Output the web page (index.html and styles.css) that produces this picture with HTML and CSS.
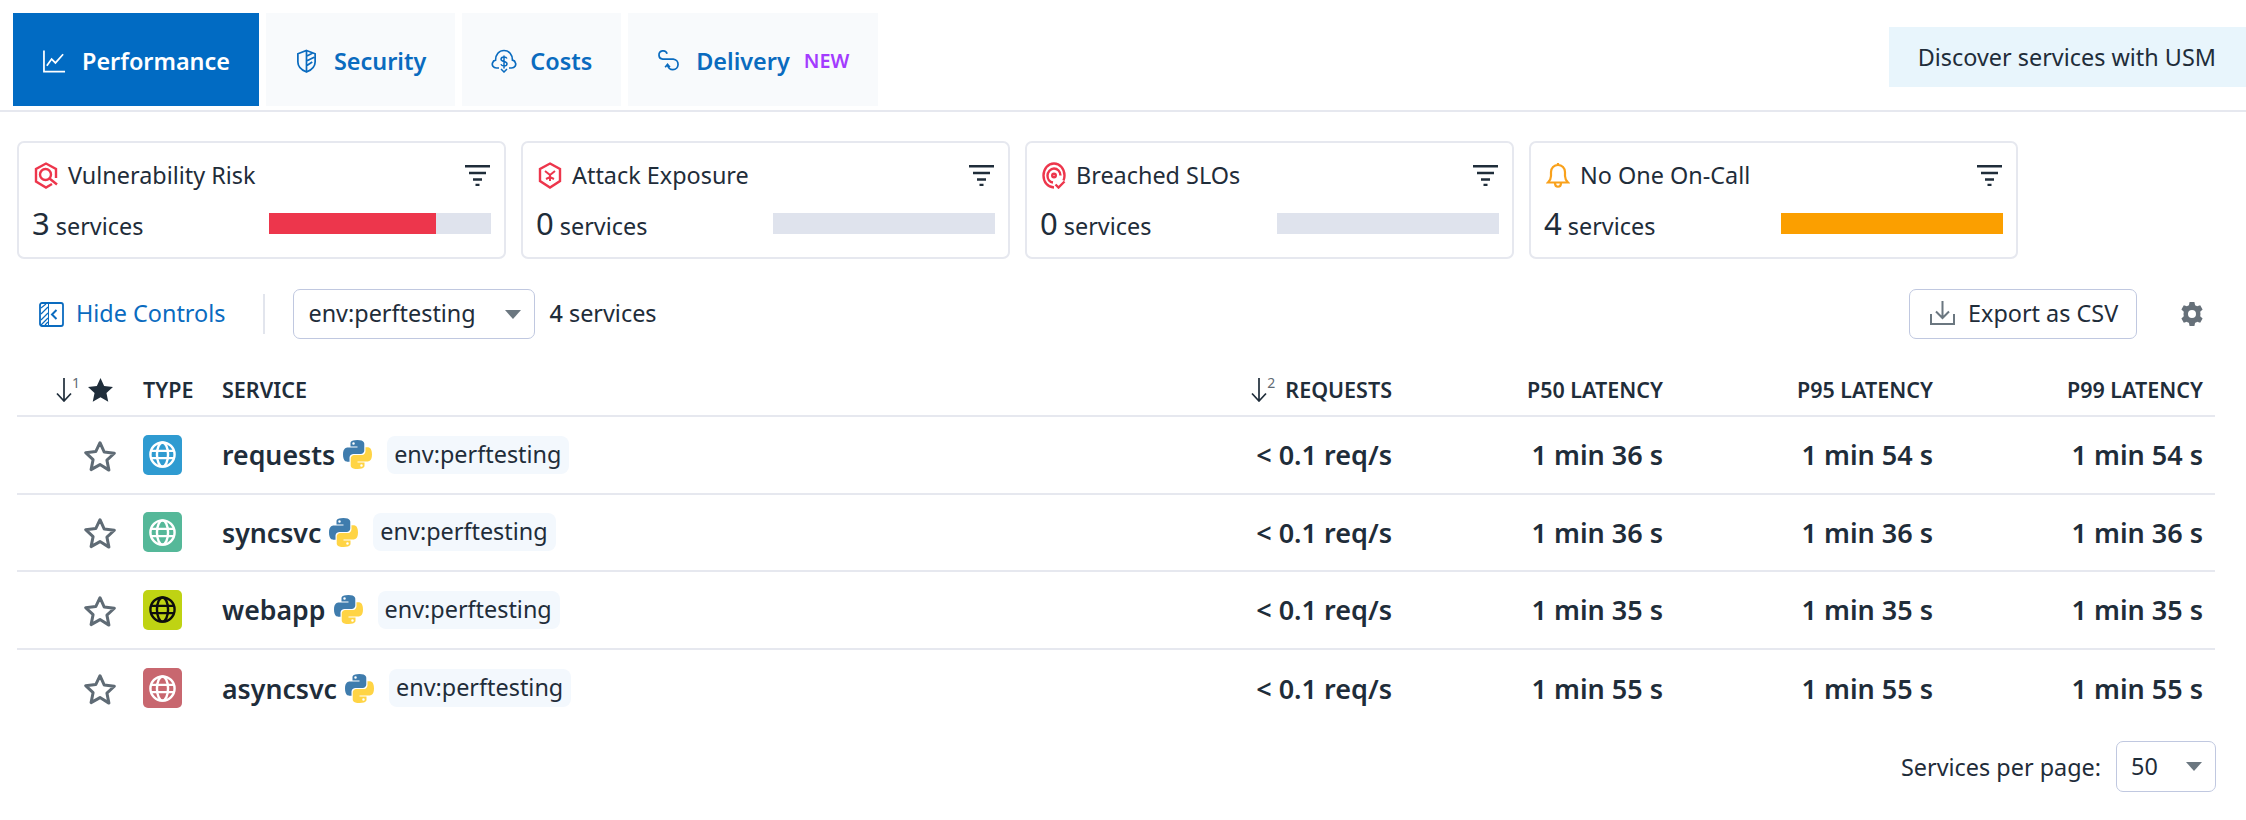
FILE: index.html
```html
<!DOCTYPE html>
<html lang="en">
	<head>
		<meta charset="utf-8">
		<title>Service Catalog</title>
		<link rel="stylesheet" href="styles.css">
	</head>
	<body>
		<svg class="defs" aria-hidden="true">
			<symbol id="filter" viewBox="0 0 25 21"><path d="M0 1.2h25M4 8h17M8 14.5h9M10.5 20h4" fill="none" stroke="currentColor" stroke-width="2.4"/></symbol>
			<symbol id="globe" viewBox="0 0 24 24"><g fill="none" stroke="currentColor" stroke-width="2"><circle cx="12" cy="12" r="10"/><ellipse cx="12" cy="12" rx="4.6" ry="10"/><path d="M2.5 9h19M2.5 15h19"/></g></symbol>
			<symbol id="star" viewBox="0 0 32 30"><path d="M16 2.5l4 8.8 9.500 1.100-7 6.500 1.900 9.400L16 23.100 7.600 27.800l1.900-9.400-7-6.500 9.500-1.100z" fill="none" stroke="#5f6b75" stroke-width="2.800" stroke-linejoin="round"/></symbol>
			<symbol id="python" viewBox="0 0 24 24">
				<path fill="#3f7cad" d="M11.900 0C5.800 0 6.200 2.600 6.200 2.600v2.800h5.800v.8H3.900S0 5.800 0 12s3.400 5.900 3.400 5.900h2v-2.900s-.1-3.400 3.300-3.400h5.700s3.200.1 3.200-3.100V3.200S18.100 0 11.900 0zM8.700 1.800a1 1 0 1 1 0 2.100 1 1 0 0 1 0-2.100z"/>
				<path fill="#ffd445" d="M12.100 24c6.100 0 5.700-2.600 5.700-2.600v-2.800H12v-.8h8.100S24 18.200 24 12s-3.400-5.900-3.400-5.900h-2V9s.1 3.400-3.300 3.400H9.600s-3.200-.1-3.200 3.100v5.300S5.900 24 12.100 24zm3.200-1.800a1 1 0 1 1 0-2.100 1 1 0 0 1 0 2.100z"/>
			</symbol>
			<symbol id="sortdown" viewBox="0 0 16 24"><path d="M8 0v23M1 15.500L8 23l7-7.500" fill="none" stroke="currentColor" stroke-width="1.700"/></symbol>
		</svg>

		<div class="topbar">
			<nav class="tabs">
				<a class="tab active">
					<svg class="tab-icon" viewBox="0 0 24 24"><path d="M1 1v22h22M4 17l5-7 4 4 8-9" fill="none" stroke="currentColor" stroke-width="1.800"/></svg>
					Performance
				</a>
				<a class="tab">
					<svg class="tab-icon" viewBox="0 0 24 24"><path d="M12 1l9 3.500V13c0 5-4 8.500-9 10.500C7 21.500 3 18 3 13V4.500zM12 1v22M12 7l6-3M12 12l8-4M12 17l6-4" fill="none" stroke="currentColor" stroke-width="1.800"/></svg>
					Security
				</a>
				<a class="tab">
					<svg class="tab-icon wide" viewBox="0 0 26 24"><path d="M8 19H5.500C2 19 .8 16.200 1.500 14c.5-1.600 1.800-2.600 3-2.800C4.500 5.500 8 1.500 13 1.500s8.500 4 8.500 9.700c1.300.2 2.600 1.200 3 2.800.7 2.200-.5 5-4 5H18" fill="none" stroke="currentColor" stroke-width="1.700"/><path d="M16 9.500c-.5-1-1.600-1.500-3-1.500-1.800 0-3 1-3 2.300 0 3 6 1.500 6 4.400 0 1.300-1.300 2.300-3 2.300-1.500 0-2.600-.6-3.100-1.700M13 6.500v13M10 20l3 3 3-3" fill="none" stroke="currentColor" stroke-width="1.500"/></svg>
					Costs
				</a>
				<a class="tab">
					<svg class="tab-icon" viewBox="0 0 24 24"><path d="M10.500 4.500A4.300 4.300 0 1 0 6 10h11a5.500 5.500 0 1 1-6 6M8.500 18.500l2.500-3 2.500 3" fill="none" stroke="currentColor" stroke-width="1.800"/></svg>
					Delivery
					<span class="tab-new">NEW</span>
				</a>
			</nav>
			<a class="discover">Discover services with USM</a>
		</div>

		<section class="summary">
			<div class="card">
				<div class="card-head">
					<svg class="card-icon" viewBox="0 0 24 27"><g fill="none" stroke="#ed364c" stroke-width="2.400"><path d="M18 22l-6 3.500L2 19.500V7l10-5.500L22 7v9"/><circle cx="11.500" cy="12.500" r="5.500"/><path d="M15.500 16.500l7.500 6"/></g></svg>
					<span class="card-title">Vulnerability Risk</span>
					<svg class="filter-icon"><use href="#filter"/></svg>
				</div>
				<div class="card-body">
					<span class="count"><b>3</b> services</span>
					<div class="bar"><div class="bar-fill red" style="width: 75%"></div></div>
				</div>
			</div>
			<div class="card">
				<div class="card-head">
					<svg class="card-icon" viewBox="0 0 24 27"><g fill="none" stroke="#ed364c" stroke-width="2.400"><path d="M12 1.500l10 5.500v12l-10 6.500L2 19V7z"/><path d="M7 9l5 4 5-4M12 13v6M8 17l4-2 4 2" stroke-width="2"/></g></svg>
					<span class="card-title">Attack Exposure</span>
					<svg class="filter-icon"><use href="#filter"/></svg>
				</div>
				<div class="card-body">
					<span class="count"><b>0</b> services</span>
					<div class="bar"></div>
				</div>
			</div>
			<div class="card">
				<div class="card-head">
					<svg class="card-icon" viewBox="0 0 24 27"><g fill="none" stroke="#ed364c" stroke-width="2.400"><path d="M12 25.500C5.500 25 1.500 20 1.500 13.500 1.500 7 6 1.500 12 1.500S22.500 7 22.500 13.500c0 2-.4 3.600-1 5"/><path d="M11 20.500c-3.500-.4-5.500-3.500-5.500-7S8.500 6.500 12 6.500s6.500 3 6.500 7"/><circle cx="12" cy="13.500" r="1.800"/><path d="M13.500 22.500l3 3 6-6"/></g></svg>
					<span class="card-title">Breached SLOs</span>
					<svg class="filter-icon"><use href="#filter"/></svg>
				</div>
				<div class="card-body">
					<span class="count"><b>0</b> services</span>
					<div class="bar"></div>
				</div>
			</div>
			<div class="card">
				<div class="card-head">
					<svg class="card-icon" viewBox="0 0 24 27"><g fill="none" stroke="#f9a11b" stroke-width="2.200"><path d="M2 20.500c2-2 3-3.500 3-6.500V10c0-4 3-7 7-7s7 3 7 7v4c0 3 1 4.500 3 6.500z"/><path d="M9 21c0 5 6 5 6 0M12 1v2"/></g></svg>
					<span class="card-title">No One On-Call</span>
					<svg class="filter-icon"><use href="#filter"/></svg>
				</div>
				<div class="card-body">
					<span class="count"><b>4</b> services</span>
					<div class="bar"><div class="bar-fill orange" style="width: 100%"></div></div>
				</div>
			</div>
		</section>

		<div class="controls">
			<a class="hide-controls">
				<svg class="hide-icon" viewBox="0 0 25 25">
					<rect x="1" y="1" width="23" height="23" rx="2" fill="none" stroke="currentColor" stroke-width="1.800"/>
					<path d="M2 6l5-4M2 12l7-7M2 18l7-7M2 23l7-7M6 23l3-3" stroke="currentColor" stroke-width="1.200" fill="none"/>
					<path d="M9.500 1v23" stroke="currentColor" stroke-width="1"/>
					<path d="M17.500 8l-4.500 4.500 4.500 4.500" fill="none" stroke="currentColor" stroke-width="2"/>
				</svg>
				Hide Controls
			</a>
			<span class="controls-sep"></span>
			<div class="select env-select">env:perftesting<span class="caret"></span></div>
			<span class="service-count"><b>4</b> services</span>
			<span class="controls-right">
				<button class="export">
					<svg class="export-icon" viewBox="0 0 25 25"><path d="M1 13v10h23V13M12.500 0v17M6 10.500l6.500 6.500 6.500-6.500" fill="none" stroke="#6b7780" stroke-width="2"/></svg>
					Export as CSV
				</button>
				<svg class="gear" viewBox="0 0 24 24"><path fill="#667079" fill-rule="evenodd" d="M9.600 0h4.800l.7 3.200c.7.300 1.400.7 2 1.100l3.100-1 2.400 4.200-2.400 2.200a9 9 0 0 1 0 4.600l2.400 2.200-2.400 4.200-3.100-1c-.6.500-1.300.8-2 1.100l-.7 3.200H9.600l-.7-3.200c-.7-.3-1.400-.6-2-1.100l-3.100 1-2.400-4.200 2.400-2.200a9 9 0 0 1 0-4.600L1.400 7.500l2.400-4.200 3.100 1c.6-.4 1.300-.8 2-1.100zM12 8a4 4 0 1 0 0 8 4 4 0 0 0 0-8z"/></svg>
			</span>
		</div>

		<div class="services">
			<div class="row head">
				<div class="cell cell-star">
					<span class="sort"><svg class="sort-arrow"><use href="#sortdown"/></svg><sup>1</sup></span>
					<svg class="star-solid" viewBox="0 0 26 25"><path fill="#1f2d3a" d="M13 0l3.800 8.300 9.200 1-6.800 6.200 1.900 9.200L13 20l-8.100 4.700 1.900-9.200L0 9.300l9.200-1z"/></svg>
				</div>
				<div class="cell">TYPE</div>
				<div class="cell">SERVICE</div>
				<div class="cell num"><span class="sort sort-req"><svg class="sort-arrow"><use href="#sortdown"/></svg><sup>2</sup></span>REQUESTS</div>
				<div class="cell num">P50 LATENCY</div>
				<div class="cell num">P95 LATENCY</div>
				<div class="cell num">P99 LATENCY</div>
			</div>
			<div class="row">
				<div class="cell cell-star"><svg class="star"><use href="#star"/></svg></div>
				<div class="cell"><span class="type-box blue"><svg class="globe"><use href="#globe"/></svg></span></div>
				<div class="cell"><span class="name">requests</span><svg class="python"><use href="#python"/></svg><span class="tag">env:perftesting</span></div>
				<div class="cell num value">&lt; 0.1 req/s</div>
				<div class="cell num value">1 min 36 s</div>
				<div class="cell num value">1 min 54 s</div>
				<div class="cell num value">1 min 54 s</div>
			</div>
			<div class="row">
				<div class="cell cell-star"><svg class="star"><use href="#star"/></svg></div>
				<div class="cell"><span class="type-box green"><svg class="globe"><use href="#globe"/></svg></span></div>
				<div class="cell"><span class="name">syncsvc</span><svg class="python"><use href="#python"/></svg><span class="tag">env:perftesting</span></div>
				<div class="cell num value">&lt; 0.1 req/s</div>
				<div class="cell num value">1 min 36 s</div>
				<div class="cell num value">1 min 36 s</div>
				<div class="cell num value">1 min 36 s</div>
			</div>
			<div class="row">
				<div class="cell cell-star"><svg class="star"><use href="#star"/></svg></div>
				<div class="cell"><span class="type-box lime"><svg class="globe"><use href="#globe"/></svg></span></div>
				<div class="cell"><span class="name">webapp</span><svg class="python"><use href="#python"/></svg><span class="tag">env:perftesting</span></div>
				<div class="cell num value">&lt; 0.1 req/s</div>
				<div class="cell num value">1 min 35 s</div>
				<div class="cell num value">1 min 35 s</div>
				<div class="cell num value">1 min 35 s</div>
			</div>
			<div class="row last">
				<div class="cell cell-star"><svg class="star"><use href="#star"/></svg></div>
				<div class="cell"><span class="type-box rose"><svg class="globe"><use href="#globe"/></svg></span></div>
				<div class="cell"><span class="name">asyncsvc</span><svg class="python"><use href="#python"/></svg><span class="tag">env:perftesting</span></div>
				<div class="cell num value">&lt; 0.1 req/s</div>
				<div class="cell num value">1 min 55 s</div>
				<div class="cell num value">1 min 55 s</div>
				<div class="cell num value">1 min 55 s</div>
			</div>
		</div>

		<div class="pager">
			Services per page:
			<div class="select page-select">50<span class="caret"></span></div>
		</div>
	</body>
</html>
```

FILE: styles.css
```css
* {
	box-sizing: border-box;
}
body {
	margin: 0;
	background-color: #ffffff;
	color: #1f2d3a;
	font-family: 'Noto Sans', sans-serif;
	font-size: 23.400px;
}
.defs {
	display: none;
}

/* tabs */
.topbar {
	display: flex;
	justify-content: space-between;
	align-items: center;
	height: 112px;
	padding: 14px 0 5px 13px;
	border-bottom: 2px solid #e6e8ef;
}
.tabs {
	display: flex;
	gap: 7px;
	height: 93px;
}
.tab {
	display: flex;
	align-items: center;
	gap: 16px;
	padding: 2px 29px 0 29px;
	background-color: #f8fafc;
	color: #0a6bbf;
	font-size: 23.400px;
	font-weight: 600;
}
.tab.active {
	padding: 2px 29px 0 30px;
	background-color: #016bc3;
	color: #ffffff;
}
.tab-icon {
	width: 23px;
	height: 24px;
}
.tab-icon.wide {
	width: 26px;
	margin-right: -3px;
}
.tab-new {
	margin-left: -2px;
	color: #a33bff;
	font-size: 19.800px;
}
.discover {
	display: flex;
	align-items: center;
	justify-content: flex-end;
	width: 357px;
	height: 60px;
	margin-bottom: 5px;
	padding-right: 30px;
	background-color: #e8f5fc;
}

/* summary cards */
.summary {
	display: flex;
	gap: 15px;
	margin: 29px 0 0 17px;
}
.card {
	width: 489px;
	height: 118px;
	padding: 16px 13px 0 13px;
	border: 2px solid #e6e8ef;
	border-radius: 7px;
}
.card-head {
	display: flex;
	align-items: center;
	height: 32px;
}
.card-icon {
	width: 24px;
	height: 27px;
	margin: 0 10px 0 2px;
}
.card-title {
	flex: 1;
}
.filter-icon {
	width: 25px;
	height: 21px;
	color: #1f2d3a;
	margin-right: 1px;
}
.card-body {
	display: flex;
	justify-content: space-between;
	align-items: center;
	height: 36px;
	margin-top: 14px;
}
.count b {
	font-size: 31px;
	font-weight: 400;
}
.bar {
	width: 222px;
	height: 21px;
	background-color: #dfe3ed;
}
.bar-fill {
	height: 100%;
}
.bar-fill.red {
	background-color: #ed364c;
}
.bar-fill.orange {
	background-color: #fb9f00;
}

/* controls row */
.controls {
	display: flex;
	align-items: center;
	height: 50px;
	margin: 30px 42px 0 39px;
}
.hide-controls {
	display: flex;
	align-items: center;
	gap: 12px;
	padding-bottom: 2px;
	color: #0a6bbf;
}
.hide-icon {
	width: 25px;
	height: 25px;
	margin-top: 2px;
}
.controls-sep {
	width: 2px;
	height: 40px;
	margin: 0 28px 0 38px;
	background-color: #e2e5ed;
}
.select {
	display: flex;
	align-items: center;
	justify-content: space-between;
	height: 50px;
	padding-bottom: 2px;
	border: 1px solid #c0c8e0;
	border-radius: 7px;
}
.env-select {
	width: 242px;
	padding-left: 14px;
	padding-right: 13px;
}
.caret {
	width: 0;
	height: 0;
	margin-top: 2px;
	border-left: 8.500px solid transparent;
	border-right: 8.500px solid transparent;
	border-top: 9px solid #6b7780;
}
.service-count {
	margin-left: 14px;
	padding-bottom: 2px;
}
.service-count b {
	font-weight: 500;
}
.controls-right {
	display: flex;
	align-items: center;
	gap: 43px;
	margin-left: auto;
}
.export {
	display: flex;
	align-items: center;
	gap: 13px;
	width: 228px;
	height: 50px;
	padding: 0 0 2px 20px;
	background-color: #ffffff;
	border: 1px solid #c0c8e0;
	border-radius: 7px;
	color: #1f2d3a;
	font-family: inherit;
	font-size: 23.400px;
}
.export-icon {
	width: 25px;
	height: 25px;
}
.gear {
	width: 24px;
	height: 24px;
}

/* table */
.services {
	margin: 21px 31px 0 17px;
}
.row {
	display: grid;
	grid-template-columns: 126px 79px 1fr 300px 271px 270px 270px;
	align-items: center;
	height: 77.500px;
	padding-right: 12px;
	border-bottom: 2px solid #e6e8ef;
}
.row.head {
	height: 57px;
	padding-top: 4px;
	font-size: 21.500px;
	font-weight: 600;
}
.row.last {
	border-bottom: none;
}
.cell {
	display: flex;
	align-items: center;
}
.cell-star {
	justify-content: flex-end;
	padding-right: 26px;
}
.head .cell-star {
	padding-right: 27px;
}
.num {
	justify-content: flex-end;
}
.value {
	font-size: 27px;
	font-weight: 600;
}
.sort {
	display: flex;
	align-items: flex-start;
	color: #1f2d3a;
	font-weight: 400;
}
.head .cell-star .sort {
	margin-right: 8px;
}
.sort-req {
	margin-right: 10px;
}
.sort-arrow {
	width: 16px;
	height: 24px;
}
.sort sup {
	margin: -2px 0 0 0;
	color: #5f6b75;
	font-size: 14px;
	line-height: 14px;
}
.star-solid {
	width: 25px;
	height: 24px;
	margin-right: 3px;
}
.star {
	width: 34px;
	height: 32px;
	margin-top: 2px;
}
.type-box {
	display: flex;
	align-items: center;
	justify-content: center;
	width: 39px;
	height: 40px;
	border-radius: 5px;
	color: #ffffff;
}
.type-box.blue {
	background-color: #2f9bd1;
}
.type-box.green {
	background-color: #55b899;
}
.type-box.lime {
	background-color: #bfd313;
	color: #0d0d0d;
}
.type-box.rose {
	background-color: #c8676f;
}
.globe {
	width: 29px;
	height: 29px;
}
.name {
	font-size: 26.700px;
	font-weight: 600;
}
.python {
	width: 29px;
	height: 29px;
	margin: 0 15px 0 8px;
}
.tag {
	padding: 3px 8px 4px 7px;
	background-color: #f3f8fd;
	border-radius: 8px;
	line-height: 31px;
}

/* pager */
.pager {
	display: flex;
	justify-content: flex-end;
	align-items: center;
	gap: 15px;
	margin: 14px 30px 0 0;
}
.page-select {
	width: 100px;
	height: 51px;
	padding-left: 14px;
	padding-right: 13px;
}
```
